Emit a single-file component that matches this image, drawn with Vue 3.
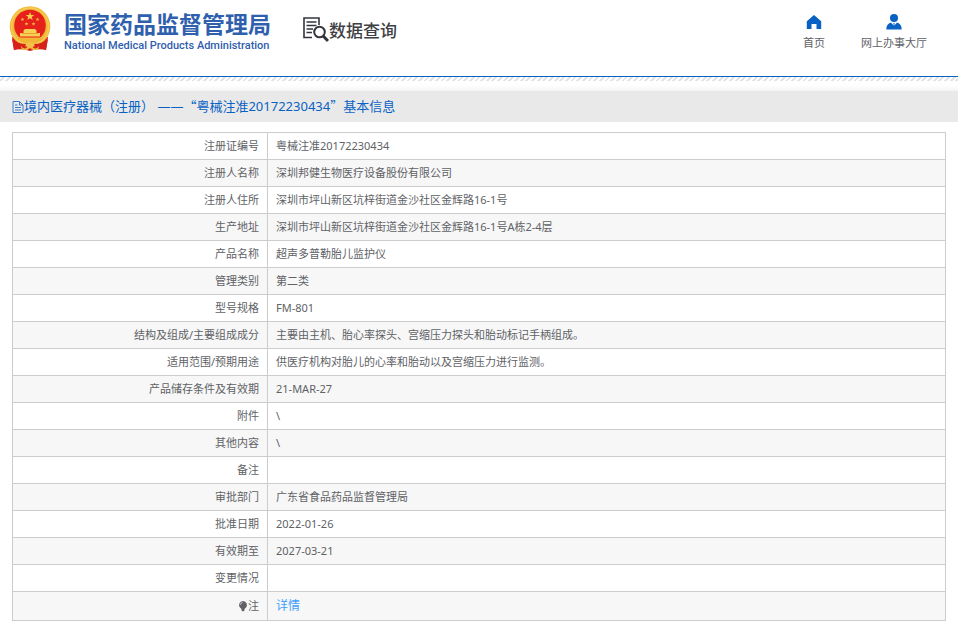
<script setup>
const rows = [
  ['注册证编号', '粤械注准20172230434'],
  ['注册人名称', '深圳邦健生物医疗设备股份有限公司'],
  ['注册人住所', '深圳市坪山新区坑梓街道金沙社区金辉路16-1号'],
  ['生产地址', '深圳市坪山新区坑梓街道金沙社区金辉路16-1号A栋2-4层'],
  ['产品名称', '超声多普勒胎儿监护仪'],
  ['管理类别', '第二类'],
  ['型号规格', 'FM-801'],
  ['结构及组成/主要组成成分', '主要由主机、胎心率探头、宫缩压力探头和胎动标记手柄组成。'],
  ['适用范围/预期用途', '供医疗机构对胎儿的心率和胎动以及宫缩压力进行监测。'],
  ['产品储存条件及有效期', '21-MAR-27'],
  ['附件', '\\'],
  ['其他内容', '\\'],
  ['备注', ''],
  ['审批部门', '广东省食品药品监督管理局'],
  ['批准日期', '2022-01-26'],
  ['有效期至', '2027-03-21'],
  ['变更情况', '']
]
</script>

<template>
  <header class="header">
    <div class="brand">
      <svg class="emblem" viewBox="0 0 42 46" aria-hidden="true">
        <path d="M3 31 L39 31 L37 44 Q29 42 21 45 Q13 42 5 44 Z" fill="#d8231b" />
        <circle cx="21" cy="20.500" r="20.300" fill="#f0b93a" />
        <circle cx="21" cy="20.500" r="18.500" fill="none" stroke="#f6cb50" stroke-width="1.500" />
        <circle cx="21" cy="19.500" r="15.800" fill="#e6211b" />
        <path d="M21 6 l1.100 3 h3.200 l-2.600 2 1 3.100 -2.700-1.900 -2.700 1.900 1-3.100 -2.600-2 h3.200z" fill="#f8ce4b" />
        <g fill="#f4bc42">
          <path id="s" d="M13.500 11.500l.5 1.300h1.400l-1.100.9.4 1.400-1.200-.8-1.200.8.4-1.400-1.100-.9h1.400z" />
          <use href="#s" x="15" />
          <use href="#s" x="4" y="4.500" />
          <use href="#s" x="11" y="4.500" />
        </g>
        <path d="M14.500 24.500 L16 23 H26 L27.500 24.500 V27 H31 V30.500 H11 V27 H14.500Z" fill="#f9cf55" />
        <path d="M13 27.500H29" stroke="#dc8b24" stroke-width=".7" />
        <path d="M7 31.500 H35 Q30 37 21 37 Q12 37 7 31.500Z" fill="#f2b637" />
        <path d="M3 33 Q9 38 17 38 L15 43 Q9 41 5 44Z M39 33 Q33 38 25 38 L27 43 Q33 41 37 44Z" fill="#d6221b" />
        <path d="M12 40 Q16 45 19 40 L21 38 L23 40 Q26 45 30 40 L29 44 H24 L21 42 L18 44 H13Z" fill="#f1b840" />
        <circle cx="21" cy="39" r="3" fill="#f3c04a" />
      </svg>
      <div class="brand-text">
        <div class="brand-cn">国家药品监督管理局</div>
        <div class="brand-en">National Medical Products Administration</div>
      </div>
    </div>
    <div class="section">
      <svg class="search-icon" viewBox="0 0 26 26" fill="none" stroke="#34343f" aria-hidden="true">
        <path d="M9 20.500H1V1H16V8" stroke-width="1.600" />
        <path d="M3.500 5H13.500M3.500 8.500H13.500M3.500 12H10M3.500 15.500H9" stroke-width="1.300" />
        <circle cx="16.500" cy="15" r="5.300" stroke-width="2" />
        <path d="M20.200 19L25 24" stroke-width="3" />
      </svg>
      <span>数据查询</span>
    </div>
    <nav class="nav">
      <a href="#">
        <svg viewBox="0 0 16 16" aria-hidden="true"><path d="M8 1L.8 7.200V14.500Q.8 15 1.300 15H5.500V10H10.500V15H14.700Q15.200 15 15.200 14.500V7.200Z" fill="#0862c4" /></svg>
        <span>首页</span>
      </a>
      <a href="#">
        <svg viewBox="0 0 16 16" aria-hidden="true"><circle cx="8" cy="4" r="4" fill="#0862c4" /><path d="M.3 15.500Q.2 10 5 8.500L8 12L11 8.500Q15.800 10 15.700 15.500Z" fill="#0862c4" /><path d="M7.300 9H8.700L8.400 10L8.700 12L8 13L7.300 12L7.600 10Z" fill="#0862c4" /></svg>
        <span>网上办事大厅</span>
      </a>
    </nav>
  </header>
  <div class="hatch"></div>
  <main>
    <h1 class="title">
      <svg viewBox="0 0 12 14" fill="none" stroke="#3c7cc9" aria-hidden="true"><path d="M1 1.500H7.500L11 5V12.500H1ZM7.500 1.500V5H11M3 7.500H9M3 10H9M3 5H5.500" /></svg>
      <span>境内医疗器械（注册） ——<span class="quote">“</span>粤械注准20172230434<span class="quote">”</span>基本信息</span>
    </h1>
    <div class="content">
      <table>
        <tbody>
          <tr v-for="row in rows" :key="row[0]">
            <th scope="row">{{ row[0] }}</th>
            <td>{{ row[1] }}</td>
          </tr>
          <tr class="last">
            <th scope="row">
              <svg class="bulb" viewBox="0 0 10 12" aria-hidden="true"><path d="M5 1A4 4 0 0 1 7.800 7.800L6.500 9V10.500L5 11.500L3.500 10.500V9L2.200 7.800A4 4 0 0 1 5 1Z" fill="#606266" /><path d="M2.500 4.800Q2.800 2.800 4.500 2.500" fill="none" stroke="#d5d5d6" /></svg>注
            </th>
            <td><a href="#">详情</a></td>
          </tr>
        </tbody>
      </table>
    </div>
  </main>
</template>

<style>
body {
  margin: 0;
  background: #fff;
  font-family: "Noto Sans", "Noto Sans CJK SC", sans-serif;
}
</style>

<style scoped>
.header {
  display: flex;
  align-items: flex-start;
  box-sizing: border-box;
  height: 77px;
  padding: 6px 31px 0 9px;
  border-bottom: 1px solid #0862c4;
}
.brand {
  display: flex;
  gap: 13px;
}
.emblem {
  width: 42px;
  height: 46px;
}
.brand-text {
  color: #2f60ae;
  white-space: nowrap;
}
.brand-cn {
  font: bold 23px/34px "Noto Sans CJK SC", sans-serif;
}
.brand-en {
  font: 500 11px/12px Roboto, sans-serif;
}
.section {
  display: flex;
  align-items: center;
  margin: 11px 0 0 32px;
  color: #3f3f46;
  font: 500 17px/26px "Noto Sans CJK SC", sans-serif;
  white-space: nowrap;
}
.search-icon {
  width: 26px;
  height: 26px;
}
.nav {
  display: flex;
  gap: 36px;
  margin-left: auto;
  padding-top: 8px;
}
.nav a {
  display: flex;
  flex-direction: column;
  align-items: center;
  gap: 5px;
  color: #606266;
  font-size: 11px;
  line-height: 16px;
  text-decoration: none;
  white-space: nowrap;
}
.nav svg {
  width: 16px;
  height: 16px;
}
.hatch {
  height: 14px;
  background:
    linear-gradient(transparent 4px, #fff 4px, #fff 8px, #f5f5f5 14px),
    repeating-linear-gradient(135deg, #fff 0 2px, #e3e3e3 2px 4px);
}
.title {
  display: flex;
  align-items: center;
  margin: 0;
  padding: 0 12px;
  background: #e9e9e9;
  color: #0862c4;
  font-size: 13px;
  font-weight: 400;
  line-height: 31px;
}
.title svg {
  width: 12px;
  height: 14px;
}
.quote {
  font-family: "Noto Sans CJK SC", sans-serif;
  line-height: 1;
}
.content {
  padding: 10px 12px;
}
table {
  width: 100%;
  border: 1px solid #ccc;
  border-collapse: collapse;
  table-layout: fixed;
  color: #606266;
  font-size: 11px;
  line-height: 16px;
}
th,
td {
  padding: 5px 8px;
  height: 16px;
  border: 1px solid #ccc;
  font-weight: 400;
  text-align: left;
}
th {
  width: 238px;
  text-align: right;
}
tr:nth-child(even) {
  background: #f7f7f7;
}
.last th,
.last td {
  padding: 6px 8px;
}
.last a {
  color: #409eff;
  font-size: 12px;
  text-decoration: none;
}
.bulb {
  width: 10px;
  height: 12px;
  vertical-align: -2px;
}
</style>
